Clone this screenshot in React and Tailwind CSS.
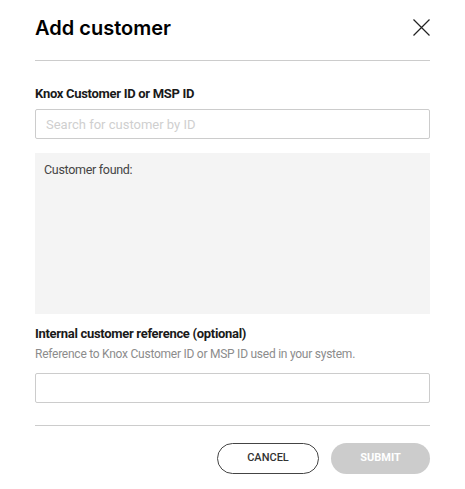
import React from "react";

const body = { fontFamily: 'Roboto, "Liberation Sans", sans-serif' };

export default function App() {
  return (
    <div className="w-[465px] h-[489px] bg-white px-[35px] flex flex-col" style={body}>
      <div className="flex items-center justify-between h-[61px] border-b border-[#cccccc]">
        <h1
          className="text-[20px] font-semibold text-black mt-[-4px]"
          style={{ fontFamily: 'Inter, "DejaVu Sans", sans-serif' }}
        >
          Add customer
        </h1>
        <svg width="19" height="19" viewBox="0 0 19 19" className="mt-[-5px] mr-[-1px]">
          <path d="M1.5 1.5 L17.5 17.5 M17.5 1.5 L1.5 17.5" stroke="#222" strokeWidth="1.2" fill="none" />
        </svg>
      </div>

      <label className="mt-[25px] text-[13px] font-bold text-[#1a1a1a] leading-[16px] tracking-[-0.3px]">
        Knox Customer ID or MSP ID
      </label>
      <input
        className="mt-[7px] h-[30px] border border-[#cccccc] rounded-[2px] px-[10px] text-[13px] outline-none placeholder:text-[#cfcfcf]"
        placeholder="Search for customer by ID"
        style={body}
      />

      <div className="mt-[14px] h-[161px] bg-[#f4f4f4] px-[9px] pt-[9px] text-[12.5px] text-[#444] leading-[16px] tracking-[-0.3px]">
        Customer found:
      </div>

      <label className="mt-[12px] text-[13px] font-bold text-[#1a1a1a] leading-[16px] tracking-[-0.3px]">
        Internal customer reference (optional)
      </label>
      <p className="mt-[5px] text-[12px] text-[#8c8c8c] leading-[15px] tracking-[-0.25px]">
        Reference to Knox Customer ID or MSP ID used in your system.
      </p>
      <input
        className="mt-[11px] h-[30px] border border-[#cccccc] rounded-[2px] px-[10px] text-[13px] outline-none"
        style={body}
      />

      <div className="mt-[22px] border-t border-[#cccccc]" />

      <div className="mt-[17px] flex justify-end gap-[12px]">
        <button
          className="w-[102px] h-[31px] rounded-full border border-[#444] text-[#333] text-[11px] font-medium"
          style={body}
        >
          CANCEL
        </button>
        <button
          className="w-[99px] h-[31px] rounded-full bg-[#cccccc] text-white text-[11px] font-bold"
          style={body}
        >
          SUBMIT
        </button>
      </div>
    </div>
  );
}
